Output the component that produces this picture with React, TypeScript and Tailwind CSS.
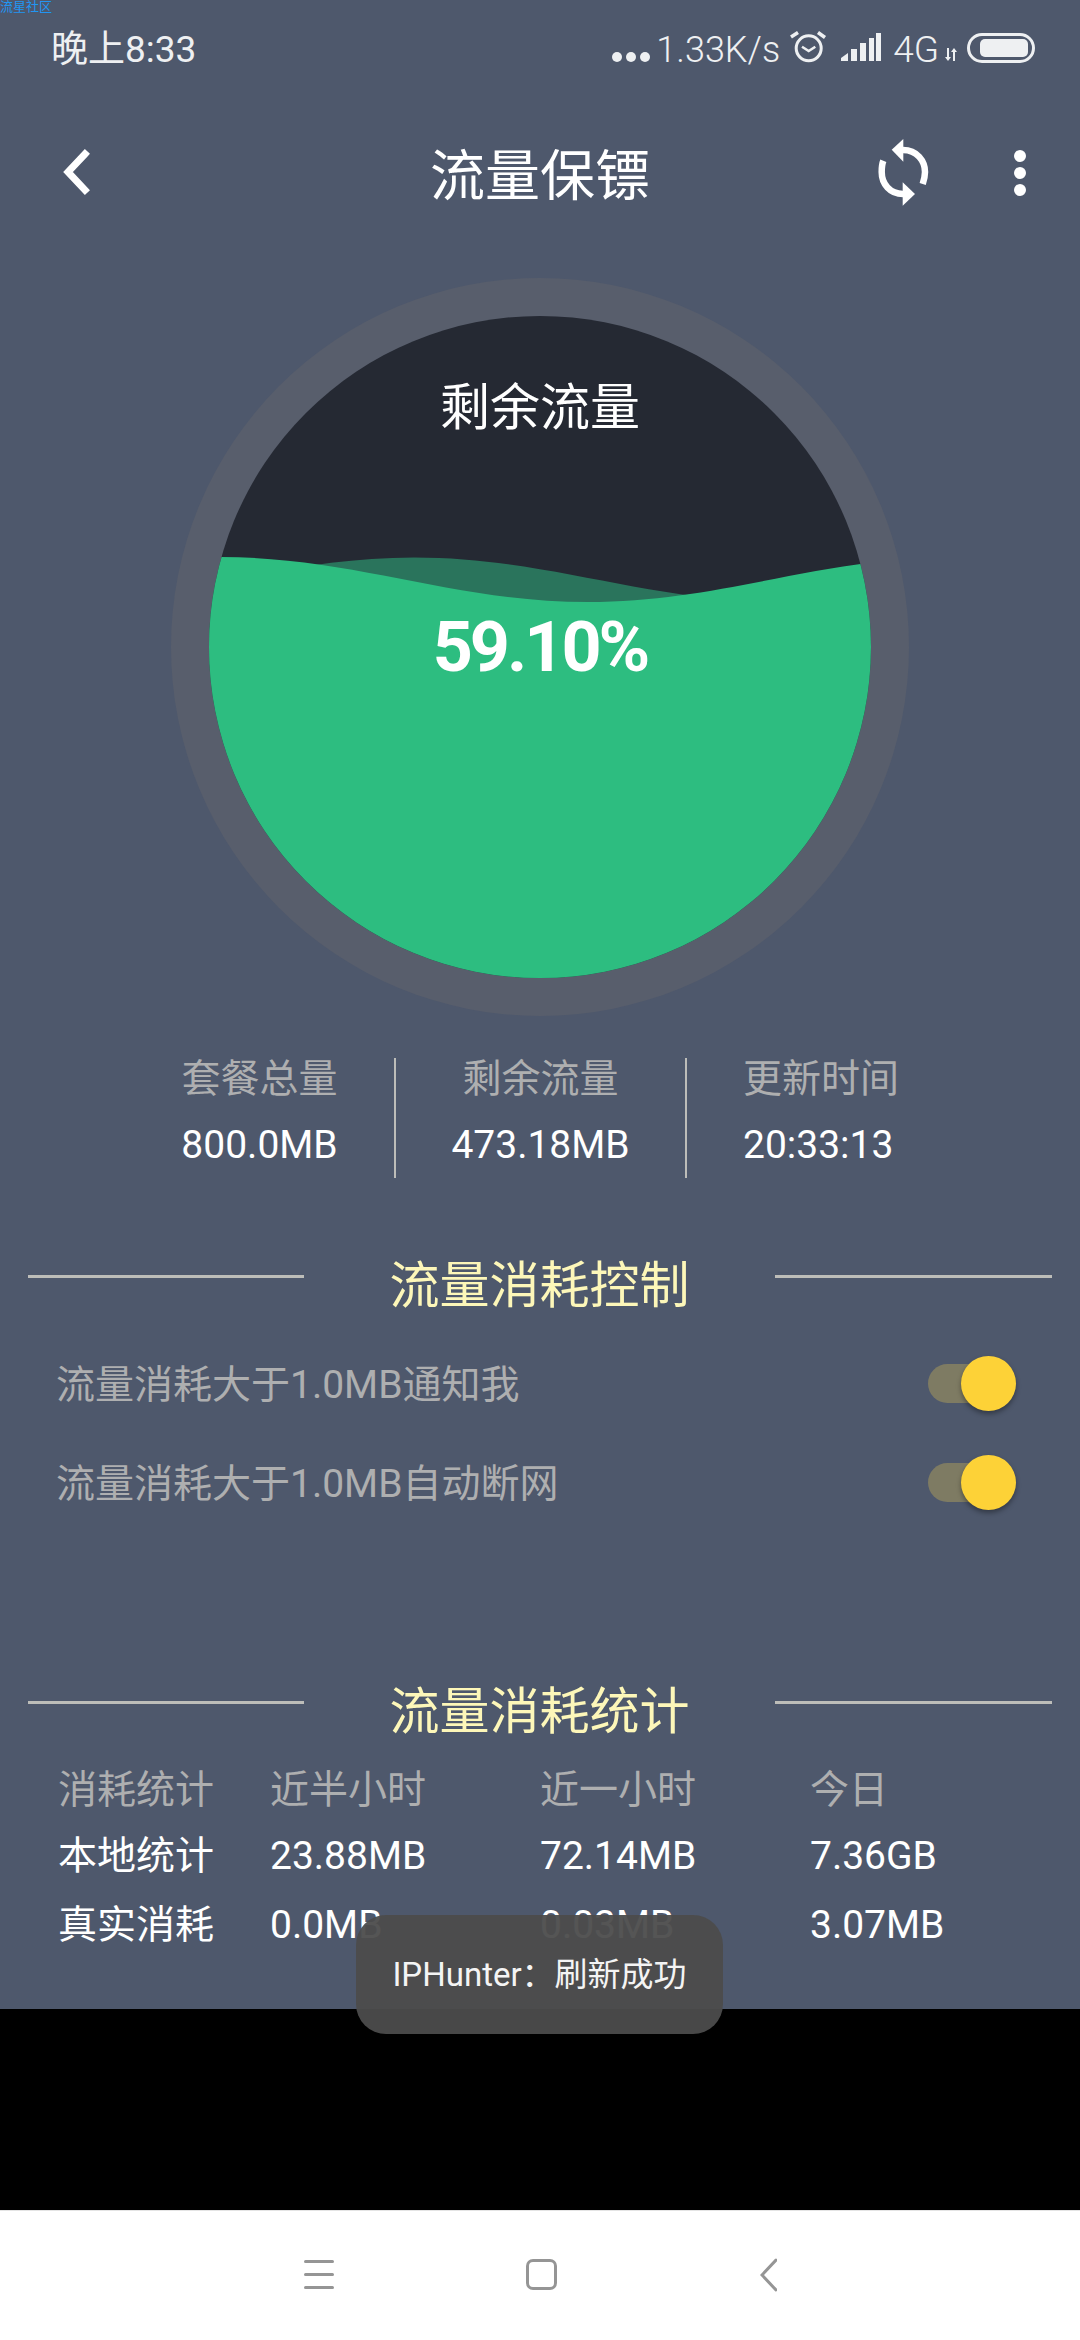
const FONT = '"Roboto", "Noto Sans CJK SC", sans-serif';

const AlarmIcon = () => (
  <svg width="40" height="40" viewBox="0 0 40 40" className="ml-[8px] mt-[-4px] text-[#eef0f2]">
    <g fill="none" stroke="currentColor">
      <circle cx="20.7" cy="20.3" r="12.5" strokeWidth="3" />
      <path d="M14 18.7l6.7 4.3 6.6-4.3" strokeWidth="2.5" />
      <path d="M3 9l7-4.5M30 4.5l7 5" strokeWidth="3.5" />
    </g>
  </svg>
);

const SignalIcon = () => (
  <svg width="40" height="28" viewBox="0 0 40 28" className="ml-[13px] mt-[-6px] text-[#eef0f2]">
    <g fill="currentColor">
      <path d="M0 28v-3l7-5v8z" />
      <rect x="10" y="16" width="6" height="12" />
      <rect x="19" y="10" width="6" height="18" />
      <rect x="28" y="5" width="5" height="23" />
      <rect x="35" y="0" width="5" height="28" />
    </g>
  </svg>
);

const TransferIcon = () => (
  <svg width="14" height="14" viewBox="0 0 14 14" className="ml-[5px] mt-[9px] text-[#eef0f2]">
    <path d="M3 0h2v9h2l-3 4-3-4h2zM9 13h2V4h2l-3-4-3 4h2z" fill="currentColor" />
  </svg>
);

const BatteryIcon = () => (
  <svg width="68" height="30" viewBox="0 0 68 30" className="ml-[9px] mt-[-4px] text-[#eef0f2]">
    <rect x="1.5" y="1.5" width="65" height="27" rx="13.5" fill="none" stroke="currentColor" strokeWidth="3" />
    <rect x="13" y="6" width="48" height="18" rx="5" fill="currentColor" />
  </svg>
);

const Gauge = () => (
  <div className="relative w-[738px] h-[738px] mx-auto">
    <svg width="738" height="738" viewBox="0 0 738 738">
      <circle cx="369" cy="369" r="369" fill="#585e6c" />
      <circle cx="369" cy="369" r="331" fill="#252933" />
      <clipPath id="inner">
        <circle cx="369" cy="369" r="331" />
      </clipPath>
      <g clipPath="url(#inner)">
        <path d="M-124 324C10 324 109 279.5 243 279.5C377 279.5 476 324 610 324L610 720L-124 720Z" fill="#2a745c" />
        <path d="M-100 279L50 279C184 279 283 324 417 324C551 324 650 279 784 279L784 720L-100 720Z" fill="#2dbd80" />
      </g>
    </svg>
    <div className="absolute left-0 right-0 top-[95px] text-center text-[50px] leading-[70px] text-white">剩余流量</div>
    <div className="absolute left-0 right-0 top-[321px] text-center text-[70px] leading-[96px] font-bold tracking-[-3px] text-white">59.10%</div>
  </div>
);

const SectionTitle = ({ title }: { title: string }) => (
  <div className="flex items-start h-[60px] pl-[28px] pr-[28px]">
    <div className="w-[276px] h-[3px] mt-[23px] bg-[#bdbdb9]" />
    <div className="flex-1 pt-[4px] text-center text-[50px] leading-[60px] text-[#fdf7b9]">{title}</div>
    <div className="w-[277px] h-[3px] mt-[23px] bg-[#bdbdb9]" />
  </div>
);

const ToggleRow = ({ label }: { label: string }) => (
  <div className="flex items-center justify-between h-[99px] pl-[56px] pr-[64px]">
    <span className="text-[39px] text-[#aeafb0] mt-[3px]">{label}</span>
    <div className="relative w-[88px] h-[39px] rounded-full bg-[#7e7b63]">
      <div className="absolute right-0 top-[-8px] w-[55px] h-[55px] rounded-full bg-[#fdd237] shadow-[0_3px_5px_rgba(0,0,0,0.35)]" />
    </div>
  </div>
);

const rows = [
  { cells: ['消耗统计', '近半小时', '近一小时', '今日'], color: 'text-[#aeafb0]' },
  { cells: ['本地统计', '23.88MB', '72.14MB', '7.36GB'], color: 'text-white' },
  { cells: ['真实消耗', '0.0MB', '0.03MB', '3.07MB'], color: 'text-white' },
];

export default function App() {
  return (
    <div className="relative w-[1080px] h-[2340px] flex flex-col overflow-hidden" style={{ fontFamily: FONT }}>
      <div className="h-[2009px] bg-[#4e586c]">
        <div className="h-[100px] relative flex items-center pl-[51px] pr-[45px] text-[#eef0f2]">
          <span className="absolute left-0 top-0 text-[13px] leading-[14px] text-[#2196f3]">流星社区</span>
          <span className="text-[37px]">晚上8:33</span>
          <div className="ml-auto flex gap-[4px] mr-[6px] mt-[14px]">
            <span className="w-[10px] h-[10px] rounded-full bg-[#eef0f2]" />
            <span className="w-[10px] h-[10px] rounded-full bg-[#eef0f2]" />
            <span className="w-[10px] h-[10px] rounded-full bg-[#eef0f2]" />
          </div>
          <span className="text-[36px] font-light">1.33K/s</span>
          <AlarmIcon />
          <SignalIcon />
          <span className="ml-[12px] text-[37px] font-light">4G</span>
          <TransferIcon />
          <BatteryIcon />
        </div>

        <div className="h-[146px] flex items-center pl-[58px] pr-[54px]">
          <svg width="36" height="46" viewBox="0 0 36 46" className="text-white mt-[-2px]">
            <path d="M27 5L10 23l17 18" fill="none" stroke="currentColor" strokeWidth="7" strokeLinecap="square" />
          </svg>
          <div className="flex-1 pl-[109px] pt-[7px] text-center text-[55px] text-white">流量保镖</div>
          <svg width="52" height="68" viewBox="0 0 52 68" className="text-white mr-[85px]">
            <path d="M26 11C40 11 48 22 48 33C48 37 47 41 45.7 45" fill="none" stroke="currentColor" strokeWidth="6.5" />
            <path d="M14.7 10.7L26.3 0v22.7z" fill="currentColor" />
            <path d="M26 55C13 55 4.7 45 4.7 33C4.7 29 5 25 6.3 21.7" fill="none" stroke="currentColor" strokeWidth="6.5" />
            <path d="M38 55L25.7 43.3v23.4z" fill="currentColor" />
          </svg>
          <div className="flex flex-col gap-[5px]">
            <span className="w-[12px] h-[12px] rounded-full bg-white" />
            <span className="w-[12px] h-[12px] rounded-full bg-white" />
            <span className="w-[12px] h-[12px] rounded-full bg-white" />
          </div>
        </div>

        <div className="mt-[32px]">
          <Gauge />
        </div>

        <div className="mt-[42px] h-[120px] flex pl-[127px]">
          <div className="w-[269px] border-r-[2px] border-[#bdbdb9] text-center pr-[2px]">
            <div className="text-[39px] leading-[42px] text-[#aeafb0]">套餐总量</div>
            <div className="text-[39px] leading-[44px] mt-[23px] text-white">800.0MB</div>
          </div>
          <div className="w-[291px] border-r-[2px] border-[#bdbdb9] text-center">
            <div className="text-[39px] leading-[42px] text-[#aeafb0]">剩余流量</div>
            <div className="text-[39px] leading-[44px] mt-[23px] text-white">473.18MB</div>
          </div>
          <div className="pl-[56px]">
            <div className="text-[39px] leading-[42px] text-[#aeafb0]">更新时间</div>
            <div className="text-[39px] leading-[44px] mt-[23px] text-white">20:33:13</div>
          </div>
        </div>

        <div className="mt-[74px]">
          <SectionTitle title="流量消耗控制" />
        </div>
        <div className="mt-[22px]">
          <ToggleRow label="流量消耗大于1.0MB通知我" />
          <ToggleRow label="流量消耗大于1.0MB自动断网" />
        </div>

        <div className="mt-[146px]">
          <SectionTitle title="流量消耗统计" />
        </div>
        <div className="mt-[19px] pl-[58px]">
          {rows.map((row, i) => (
            <div key={i} className={`grid grid-cols-[212px_270px_270px_1fr] h-[66px] items-center text-[39px] ${row.color} ${i === 2 ? 'mt-[3px]' : ''}`}>
              {row.cells.map((cell) => (
                <span key={cell}>{cell}</span>
              ))}
            </div>
          ))}
        </div>
      </div>

      <div className="h-[201px] bg-black" />

      <div className="flex-1 bg-white border-t border-[#e4e4e4] flex items-center justify-center">
        <div className="flex items-center mt-[-2px]">
          <div className="flex flex-col gap-[10px]">
            <span className="w-[30px] h-[3px] rounded-full bg-[#959595]" />
            <span className="w-[30px] h-[3px] rounded-full bg-[#959595]" />
            <span className="w-[30px] h-[3px] rounded-full bg-[#959595]" />
          </div>
          <div className="ml-[192px] w-[31px] h-[31px] rounded-[7px] border-[3px] border-[#959595]" />
          <svg width="17" height="34" viewBox="0 0 17 34" className="ml-[203px]">
            <path d="M16 2L2 17l14 15" fill="none" stroke="#959595" strokeWidth="3" strokeLinecap="round" />
          </svg>
        </div>
      </div>

      <div className="absolute left-[356px] top-[1915px] w-[367px] h-[119px] rounded-[30px] bg-[#4c4c4c]/95 flex items-center justify-center">
        <span className="text-[33px] text-[#f4f4f4]">IPHunter：刷新成功</span>
      </div>
    </div>
  );
}
